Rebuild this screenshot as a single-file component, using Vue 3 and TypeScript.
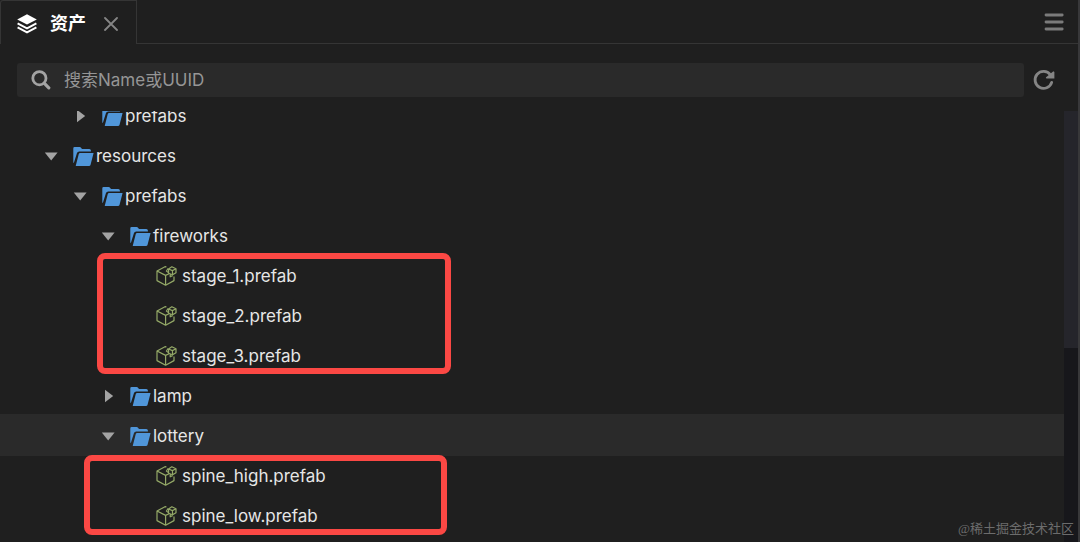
<script setup lang="ts">
import { ref } from 'vue'

interface Row {
  name: string
  level: number
  kind: 'folder' | 'file'
  open?: boolean
  selected?: boolean
}
interface Group {
  rows: Row[]
  mark?: string
}

const query = ref('')
const groups: Group[] = [
  {
    rows: [
      { name: 'prefabs', level: 1, kind: 'folder' },
      { name: 'resources', level: 0, kind: 'folder', open: true },
      { name: 'prefabs', level: 1, kind: 'folder', open: true },
      { name: 'fireworks', level: 2, kind: 'folder', open: true },
    ],
  },
  {
    mark: 'mark-stages',
    rows: [
      { name: 'stage_1.prefab', level: 3, kind: 'file' },
      { name: 'stage_2.prefab', level: 3, kind: 'file' },
      { name: 'stage_3.prefab', level: 3, kind: 'file' },
    ],
  },
  {
    rows: [
      { name: 'lamp', level: 2, kind: 'folder' },
      { name: 'lottery', level: 2, kind: 'folder', open: true, selected: true },
    ],
  },
  {
    mark: 'mark-spines',
    rows: [
      { name: 'spine_high.prefab', level: 3, kind: 'file' },
      { name: 'spine_low.prefab', level: 3, kind: 'file' },
    ],
  },
]
</script>

<template>
  <main class="panel">
    <header class="tabs">
      <div class="tab">
        <svg class="layers" viewBox="0 0 20 20" aria-hidden="true">
          <path d="M10 0.2 19.8 5.4 10 10.6 0.2 5.4Z" fill="#fff" />
          <path d="M0.6 9.4 10 14.3 19.4 9.4M0.6 13.4 10 18.3 19.4 13.4" fill="none" stroke="#fff" stroke-width="2" />
        </svg>
        <h1>资产</h1>
        <button class="close" aria-label="关闭">
          <svg viewBox="0 0 14 14"><path d="M1 1 13 13M13 1 1 13" stroke="#858585" stroke-width="1.8" stroke-linecap="round" /></svg>
        </button>
      </div>
      <div class="bar">
        <button class="menu" aria-label="菜单">
          <svg viewBox="0 0 20 18"><path d="M2 2H18.2M2 9H18.2M2 16H18.2" stroke="#7b7b7b" stroke-width="2.8" stroke-linecap="round" /></svg>
        </button>
      </div>
    </header>

    <div class="search-row">
      <label class="search">
        <svg viewBox="0 0 20 20" aria-hidden="true">
          <circle cx="8.4" cy="8.2" r="6.6" fill="none" stroke="#a3a3a3" stroke-width="2.8" />
          <path d="M13.4 13.4 17.8 17.8" stroke="#a3a3a3" stroke-width="3.2" stroke-linecap="round" />
        </svg>
        <input v-model="query" type="text" placeholder="搜索Name或UUID" aria-label="搜索Name或UUID" />
      </label>
      <button class="refresh" aria-label="刷新">
        <svg viewBox="0 0 22 22">
          <path d="M18.7 13.4A8.5 8.5 0 1 1 17.4 5.8" fill="none" stroke="#858585" stroke-width="2.8" stroke-linecap="round" />
          <path d="M20.4 2.2 21.4 3V9.6H13.4L12.8 8.4Z" fill="#858585" />
        </svg>
      </button>
    </div>

    <section class="content">
      <div class="tree">
        <ul v-for="(group, g) in groups" :key="g" class="group">
          <li v-for="(row, r) in group.rows" :key="r" class="row" :class="['level-' + row.level, row.kind, { selected: row.selected }]">
            <button v-if="row.kind === 'folder'" class="toggle" :aria-expanded="!!row.open" :aria-label="row.name">
              <svg viewBox="0 0 14 14">
                <path v-if="row.open" d="M0.8 3.4H13.6L7.2 11.6Z" fill="#a3a3a3" />
                <path v-else d="M4 0.8V13.2L12.2 7Z" fill="#a3a3a3" />
              </svg>
            </button>
            <svg v-if="row.kind === 'folder'" class="icon" viewBox="0 0 21 20" aria-hidden="true">
              <path d="M0.3 2.4Q0.3 1 1.5 1H6.6Q7.6 1 8.2 1.9L9 3H16.3Q17.9 3 17.9 4.6V5.6H6.2Q4.6 5.6 4 7.1L0.9 16.8H0.3Z" fill="#5096d9" />
              <path d="M7.1 7.1H20.6L17.5 18.9Q17.2 20 16 20H2.7L5.7 8.3Q6 7.1 7.1 7.1Z" fill="#5096d9" />
            </svg>
            <svg v-else class="icon" viewBox="0 0 21 20" fill="none" stroke="#94a967" stroke-width="1.2" stroke-linejoin="round" aria-hidden="true">
              <path d="M10.4 0.9 9 0.7 1 5V14.6L9.6 19.2 18 14.6V10.6M1 5 9.6 9.4 13 7.7M9.6 9.4V19.2" />
              <path d="M15.8 0.8 20 2.8V6.8L16.6 8.8 12.6 7.2V3ZM12.6 3 16.4 4.6 20 2.8M16.4 4.6 16.6 8.8M12.2 2.4 10.4 5 12.4 6.6M14.2 8.6V10.8L16.6 9.6" />
            </svg>
            <span>{{ row.name }}</span>
          </li>
          <li v-if="group.mark" class="mark" :class="group.mark" aria-hidden="true"></li>
        </ul>
      </div>
      <div class="track"><div class="thumb"></div></div>
    </section>
    <small class="credit">@稀土掘金技术社区</small>
  </main>
</template>

<style>
body {
  background: #1f1f1f;
}
</style>

<style scoped>
* {
  box-sizing: border-box;
}
.panel {
  position: relative;
  display: flex;
  flex-direction: column;
  height: 100vh;
  overflow: hidden;
  background: #1f1f1f;
  border-right: 2px solid #38383a;
  color: #e6e6e6;
  font-family: Inter, "Noto Sans CJK SC", sans-serif;
  font-size: 17px;
}
button {
  display: flex;
  padding: 0;
  border: 0;
  background: none;
}
.tabs {
  display: flex;
  height: 44px;
}
.tab {
  display: flex;
  align-items: center;
  width: 137px;
  padding: 2px 0 0 16px;
  border: 1px solid #353535;
  border-bottom: 0;
  border-top-left-radius: 3px;
}
.layers {
  width: 20px;
  height: 20px;
}
h1 {
  margin: 0 18px 0 13px;
  color: #fff;
  font-size: 18px;
  line-height: 24px;
  font-weight: 700;
}
.close svg {
  width: 14px;
  height: 14px;
}
.bar {
  display: flex;
  flex: 1;
  align-items: center;
  justify-content: flex-end;
  padding-right: 14px;
  border-bottom: 1px solid #353535;
}
.menu svg {
  width: 20px;
  height: 18px;
}
.search-row {
  display: flex;
  align-items: center;
  gap: 9px;
  padding: 19px 23px 14px 17px;
}
.search {
  display: flex;
  flex: 1;
  align-items: center;
  gap: 13px;
  height: 34px;
  padding-left: 14px;
  border-radius: 3px;
  background: #2a2a2a;
}
.search svg {
  width: 20px;
  height: 20px;
}
.search input {
  flex: 1;
  min-width: 0;
  padding: 0;
  border: 0;
  outline: 0;
  background: none;
  color: #e6e6e6;
  font: inherit;
}
.search input::placeholder {
  color: #969696;
  opacity: 1;
}
.refresh svg {
  width: 22px;
  height: 22px;
}
.content {
  display: flex;
  flex: 1;
  min-height: 0;
}
.tree {
  display: flex;
  flex: 1;
  flex-direction: column;
  justify-content: flex-start;
  overflow: hidden;
}
.group {
  position: relative;
  margin: 0;
  padding: 0;
  list-style: none;
}
.group:first-child {
  margin-top: -15px;
}
.row {
  display: flex;
  align-items: center;
  height: 40px;
}
.level-0 {
  padding-left: 44px;
}
.level-1 {
  padding-left: 73px;
}
.level-2 {
  padding-left: 101px;
}
.level-3 {
  padding-left: 156px;
}
.selected {
  background: #2a2a2a;
  box-shadow: 0 -2px #2a2a2a;
}
.toggle {
  margin-right: 15px;
}
.toggle svg {
  width: 14px;
  height: 14px;
}
.icon {
  width: 21px;
  height: 20px;
  margin-right: 2px;
}
.file .icon {
  margin-right: 5px;
}
.mark {
  position: absolute;
  border: 6px solid #fb4844;
  border-radius: 8px;
}
.mark-stages {
  top: -3px;
  bottom: 2px;
  left: 97px;
  width: 354px;
}
.mark-spines {
  top: -1px;
  bottom: 1px;
  left: 84px;
  width: 363px;
}
.track {
  width: 14px;
  background: #17171b;
}
.thumb {
  height: 55%;
  background: #25252b;
}
.credit {
  position: absolute;
  right: 4px;
  bottom: 3px;
  color: #6c6c6c;
  font-family: "Liberation Serif", "Noto Sans CJK SC", serif;
  font-size: 13px;
  line-height: 20px;
}
</style>
